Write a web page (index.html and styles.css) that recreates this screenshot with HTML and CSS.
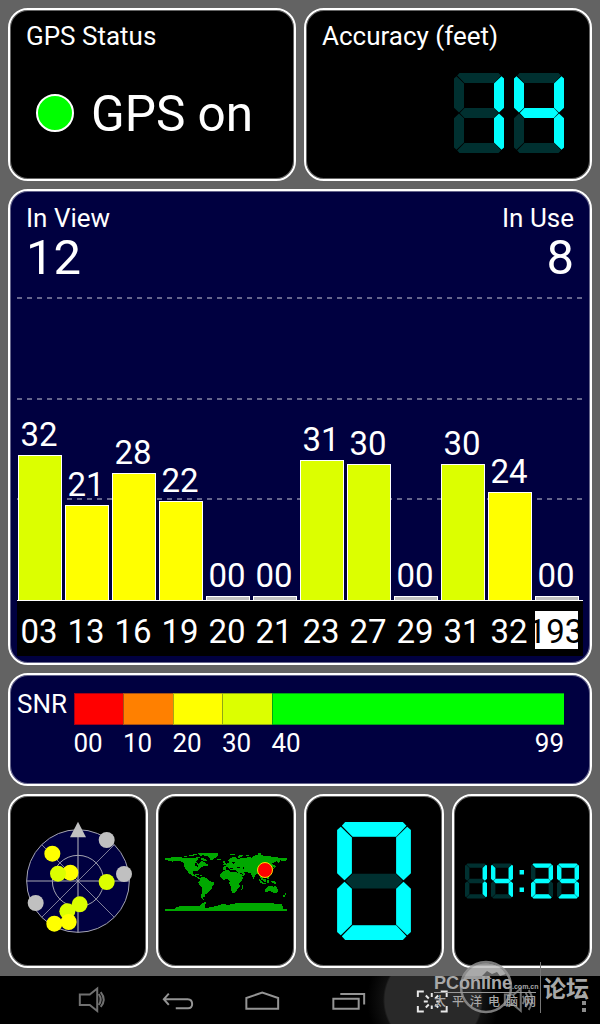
FILE: index.html
```
<!DOCTYPE html>
<html lang="en">
<head>
  <meta charset="UTF-8">
  <title>GPS Test</title>
  <link rel="stylesheet" href="styles.css">
</head>
<body>
  <!-- seven segment shapes, 50 x 80 -->
  <svg class="defs" width="0" height="0">
    <defs>
      <path id="a" d="M5.5 0H44.5L47 2.5L40 10H10.5L3.2 2.5Z"/>
      <path id="b" d="M47.5 3.2L50 5.4V34.8L45 39.5L40 34.8V10.5Z"/>
      <path id="c" d="M45 40.5L50 45.2V74.6L47.5 76.8L40 69.5V45.2Z"/>
      <path id="d" d="M5.5 80H44.5L47 77.5L40 70H10.5L3.2 77.5Z"/>
      <path id="e" d="M5 40.5L10 45.2V69.5L2.5 76.8L0 74.6V45.2Z"/>
      <path id="f" d="M2.5 3.2L10 10.5V34.8L5 39.5L0 34.8V5.4Z"/>
      <path id="g" d="M5.8 40L10.5 35H39.8L44.4 40L39.8 45H10.5Z"/>
      <g id="off">
        <use href="#a"/><use href="#b"/><use href="#c"/><use href="#d"/><use href="#e"/><use href="#f"/><use href="#g"/>
      </g>
      <g id="n0"><use href="#a"/><use href="#b"/><use href="#c"/><use href="#d"/><use href="#e"/><use href="#f"/></g>
      <g id="n1"><use href="#b"/><use href="#c"/></g>
      <g id="n2"><use href="#a"/><use href="#b"/><use href="#g"/><use href="#e"/><use href="#d"/></g>
      <g id="n4"><use href="#f"/><use href="#g"/><use href="#b"/><use href="#c"/></g>
      <g id="n9"><use href="#a"/><use href="#b"/><use href="#c"/><use href="#d"/><use href="#f"/><use href="#g"/></g>
    </defs>
  </svg>

  <main class="dashboard">
    <section class="panel status">
      <h2>GPS Status</h2>
      <div class="status-row">
        <span class="status-dot"></span>
        <span class="status-text">GPS on</span>
      </div>
    </section>

    <section class="panel accuracy">
      <h2>Accuracy (feet)</h2>
      <svg class="lcd" width="110" height="80" viewBox="0 0 110 80">
        <use class="dim" href="#off"/><use href="#n1"/>
        <use class="dim" href="#off" x="60"/><use href="#n4" x="60"/>
      </svg>
    </section>

    <section class="panel signal">
      <div class="signal-head">
        <div><h2>In View</h2><p>12</p></div>
        <div class="right"><h2>In Use</h2><p>8</p></div>
      </div>
      <div class="plot">
        <div class="col"><span>32</span><i class="bar lime" style="height:145px"></i></div>
        <div class="col"><span>21</span><i class="bar yellow" style="height:95px"></i></div>
        <div class="col"><span>28</span><i class="bar yellow" style="height:127px"></i></div>
        <div class="col"><span>22</span><i class="bar yellow" style="height:99px"></i></div>
        <div class="col"><span>00</span><i class="bar none" style="height:4px"></i></div>
        <div class="col"><span>00</span><i class="bar none" style="height:4px"></i></div>
        <div class="col"><span>31</span><i class="bar lime" style="height:140px"></i></div>
        <div class="col"><span>30</span><i class="bar lime" style="height:136px"></i></div>
        <div class="col"><span>00</span><i class="bar none" style="height:4px"></i></div>
        <div class="col"><span>30</span><i class="bar lime" style="height:136px"></i></div>
        <div class="col"><span>24</span><i class="bar yellow" style="height:108px"></i></div>
        <div class="col"><span>00</span><i class="bar none" style="height:4px"></i></div>
      </div>
      <div class="ids">
        <span>03</span><span>13</span><span>16</span><span>19</span><span>20</span><span>21</span>
        <span>23</span><span>27</span><span>29</span><span>31</span><span>32</span><span class="sbas">193</span>
      </div>
    </section>

    <section class="panel snr">
      <h2>SNR</h2>
      <div class="scale">
        <div class="step red"></div>
        <div class="step orange"></div>
        <div class="step yellow"></div>
        <div class="step lime"></div>
        <div class="step green"></div>
        <span>00</span><span>10</span><span>20</span><span>30</span>
        <span class="ends"><b>40</b><b>99</b></span>
      </div>
    </section>

    <section class="panel small">
      <svg width="120" height="124" viewBox="54 86 360 372">
        <circle cx="234" cy="272" r="154" fill="#000040"/>
        <path d="M80 272H388M234 118V426" stroke="#70708c" stroke-width="5"/>
        <path d="M125 163L343 381M343 163L125 381" stroke="#c0c0c8" stroke-width="2"/>
        <g fill="none" stroke="#a4a4b0" stroke-width="3">
          <circle cx="234" cy="272" r="77"/>
          <circle cx="234" cy="272" r="154"/>
        </g>
        <path fill="#c0c0c0" d="M234 94L258 141H210Z"/>
        <g fill="#c0c0c0">
          <circle cx="320" cy="149" r="24"/>
          <circle cx="372" cy="251" r="24"/>
          <circle cx="107" cy="338" r="24"/>
        </g>
        <g fill="#ffff00">
          <circle cx="157" cy="190" r="24"/>
          <circle cx="211" cy="247" r="24"/>
        </g>
        <g fill="#dcff00">
          <circle cx="174" cy="250" r="24"/>
          <circle cx="320" cy="275" r="24"/>
          <circle cx="239" cy="342" r="24"/>
          <circle cx="202" cy="363" r="24"/>
        </g>
        <g fill="#ffff00">
          <circle cx="163" cy="400" r="24"/>
          <circle cx="206" cy="395" r="24"/>
        </g>
      </svg>
    </section>

    <section class="panel small">
      <svg width="122" height="60" viewBox="39 63 366 180">
        <g fill="#00a800" shape-rendering="crispEdges">
          <!-- north america -->
          <path d="M54 84L62 80L86 82L96 84L120 83L128 85L136 84L138 90L132 94L140 102L146 94L152 93L160 99L167 104L158 108L149 111L144 116L138 121L139 127L134 122L123 124L122 130L127 134L132 132L132 137L140 142L147 145L140 146L130 140L120 136L111 131L103 119L98 112L96 101L89 95L72 92L60 95L56 92L39 91V85Z"/>
          <path d="M110 76H125V79H110ZM122 71H134V75H122ZM132 80H143V83H132ZM146 82L158 86L164 92L158 94L147 89ZM136 70L157 68L151 77H143ZM128 85H137V88H128ZM96 79H106V82H96ZM160 104L167 102V108H160ZM133 131H142V134H133ZM144 134H150V137H144Z"/>
          <!-- greenland, iceland -->
          <path d="M155 71L165 68H199V74L195 81L186 85L181 91L176 90L171 80L161 77L153 76Z"/>
          <path d="M196 86H206V90H196ZM212 93H218V98H212ZM217 98H222V106H214V102H217ZM234 72H249V75H234Z"/>
          <!-- south america -->
          <path d="M145 145L150 141L163 143L170 149L174 154L186 158L185 164L180 171L178 179L170 184L166 190L159 193L158 200L153 203L155 209L149 206L147 198L150 185L149 173L142 165L139 157L144 152Z"/>
          <!-- africa -->
          <path d="M215 122L230 120L235 125L247 126L257 128L264 141L274 142L270 151L262 160L263 169L258 175L253 184L247 188L241 189L237 180L236 169L231 161L233 153L227 148L212 149L205 140V132L211 127Z"/>
          <path d="M273 165H270V172L267 180H271L273 171Z"/>
          <!-- europe, asia -->
          <path d="M213 119V110L222 108L220 103L231 98L229 92L234 86L244 80L255 83L254 89L266 85H282L286 80L299 83L306 78L320 73L330 75L334 79L354 78L362 81L376 82L390 85L404 83V91L392 94L385 91L379 101L376 94L369 95L359 101L368 106L362 114L358 124L352 130L347 137L340 142L335 140L333 147L330 151L324 141L319 131L312 134L307 141L305 147L301 140L296 130L285 127L275 126L281 131L275 138L265 142L259 132L255 124L249 119L244 120L235 120L231 114L224 111L221 119Z"/>
          <path d="M319 69H328V75H319ZM258 80L262 76L273 75V78L264 81V85H258ZM281 75H292V78H281ZM369 106L372 109L367 116L362 119L366 112Z"/>
          <!-- islands, australia -->
          <path d="M320 147L326 150L332 158H325ZM334 147L343 145L341 156L335 155ZM330 159H343V162H330ZM345 151H350V160H345ZM357 153H366L372 158V162L363 160ZM345 138L350 143V147L345 145Z"/>
          <path d="M338 177L345 173L350 169L358 167L364 171L368 166L374 172L378 182L374 189L368 190L360 185L351 184L341 187Z"/>
          <path d="M400 190H403V194H400ZM393 197L399 194V200H393Z"/>
          <!-- antarctica -->
          <path d="M39 237H66L73 231L90 228L145 227L150 221L157 216H162L160 225L158 232L165 234L175 232L198 227L210 223L232 224L250 220H300L320 219L348 220L380 221L389 223L392 229V236L405 237V243H39Z"/>
        </g>
        <g fill="#000000" shape-rendering="crispEdges">
          <path d="M128 98L133 98L135 105L143 108L135 110L129 106ZM233 113L239 113L244 118H236ZM252 114L264 110V115H253ZM272 110H277V118H272ZM239 98L249 95V98L243 102ZM265 128L273 133L271 135L265 131Z"/>
        </g>
        <circle cx="339" cy="120" r="22.5" fill="#ff0000" stroke="#ffe000" stroke-width="3"/>
      </svg>
    </section>

    <section class="panel small">
      <svg class="lcd" width="74" height="118" viewBox="0 0 50 80">
        <use class="dim" href="#off"/><use href="#n0"/>
      </svg>
    </section>

    <section class="panel small">
      <svg class="lcd" width="114" height="36" viewBox="0 0 259 80">
        <use class="dim" href="#off"/><use href="#n1"/>
        <use class="dim" href="#off" x="59"/><use href="#n4" x="59"/>
        <path d="M124 15H134V25H124ZM124 55H134V65H124Z"/>
        <use class="dim" href="#off" x="150"/><use href="#n2" x="150"/>
        <use class="dim" href="#off" x="209"/><use href="#n9" x="209"/>
      </svg>
    </section>
  </main>

  <nav class="navbar">
    <svg class="soft" viewBox="0 0 86 48">
      <path d="M31 18.5H41L48.5 12.5V35L41 29H31Z"/>
      <path d="M50 18Q54 23.5 50 29M52 16Q58 23.5 52 31"/>
    </svg>
    <svg viewBox="0 0 86 48">
      <path d="M34 17.5L29 23.2L34 29M29 23.2H53Q57.5 23.5 57.5 28T53 32.3H41"/>
    </svg>
    <svg viewBox="0 0 86 48">
      <path d="M26.5 32.7V22L42.5 16.5L58.5 22V32.7Z"/>
    </svg>
    <svg viewBox="0 0 86 48">
      <path d="M27.5 22.7H53V32.7H27.5ZM34.5 18H58.5V28.5"/>
    </svg>
    <svg class="bright" viewBox="0 0 86 48">
      <path d="M27 21V15.5H33M50 15.5H56V21M56 30V35.5H50M33 35.5H27V30"/>
      <path d="M41 17V21M41 29.5V33M33 25.5H37M45.5 25.5H49.5M35 19.5L38 22.5M47.5 19.5L44.5 22.5M35 31.5L38 28.5M47.5 31.5L44.5 28.5"/>
    </svg>
    <svg class="soft" viewBox="0 0 86 48">
      <path d="M28 18.500H37L44 12.500V35L37 29H28Z"/>
      <path d="M46 20Q49 24 46 28M49 17Q54 24 49 31M52 14Q59 24 52 34"/>
    </svg>
    <span class="more"><i></i><i></i><i></i></span>
  </nav>

  <!-- site watermark over the bottom right corner -->
  <div class="watermark">
    <svg class="globe" width="56" height="56" viewBox="0 0 56 56">
      <path d="M5 17C12 3 36 -3 48 15L42 17L39 13L34 15L29 12L24 17H30L34 20H4Z" fill="#bbb"/>
      <circle cx="28" cy="28" r="25" fill="none" stroke="#999" stroke-width="2.5"/>
    </svg>
    <div class="brand">
      <div class="brand-en">PConline<small>.com.cn</small></div>
      <div class="brand-cn">太平洋电脑网</div>
    </div>
    <div class="forum">论坛</div>
  </div>
</body>
</html>
```

FILE: styles.css
```
* {
  box-sizing: border-box;
}

body {
  margin: 0;
  width: 600px;
  height: 1024px;
  overflow: hidden;
  position: relative;
  background: #636363;
  color: #fff;
  font-family: Roboto, "Noto Sans CJK SC", sans-serif;
}

.defs {
  display: block;
}

h2, p {
  margin: 0;
  font-weight: normal;
}

h2 {
  font-size: 26px;
  line-height: 36px;
}

.dashboard {
  display: grid;
  grid-template-columns: repeat(4, 140px);
  grid-template-rows: 173px 476px 113px 174px;
  gap: 8px;
  padding: 8px;
  height: 976px;
}

.panel {
  border: 2px solid #fff;
  border-radius: 20px;
  background: #000;
  box-shadow: inset 0 0 0 1px rgba(255, 255, 255, 0.4);
}

/* top row */
.status, .accuracy {
  grid-column: span 2;
  padding: 8px 16px 0;
}

.status-row {
  display: flex;
  align-items: center;
  gap: 17px;
  height: 118px;
  padding-left: 10px;
}

.status-dot {
  width: 38px;
  height: 38px;
  border: 2px solid #fff;
  border-radius: 50%;
  background: #00ff00;
}

.status-text {
  font-size: 49.5px;
  line-height: 58px;
  padding-top: 2px;
}

.accuracy .lcd {
  display: block;
  margin: 19px 10px 0 auto;
}

.lcd {
  fill: #00ffff;
}

.dim {
  fill: #003030;
}

/* satellite bars */
.signal {
  grid-column: span 4;
  padding: 0 7px;
  background: #000040;
}

.signal-head {
  display: flex;
  justify-content: space-between;
  height: 85px;
  padding: 9px 9px 0;
}

.signal-head p {
  font-size: 49px;
  line-height: 43px;
}

.right {
  text-align: right;
}

.plot {
  --dash: repeating-linear-gradient(90deg, #66668c 0 5px, transparent 5px 10px);
  display: flex;
  align-items: flex-end;
  gap: 3px;
  height: 325px;
  padding-left: 1px;
  border-bottom: 1px solid #fff;
  background: var(--dash) 0 21px / 100% 2px no-repeat,
              var(--dash) 0 122px / 100% 2px no-repeat,
              var(--dash) 0 222px / 100% 2px no-repeat;
}

.col {
  width: 44px;
  font-size: 33px;
  line-height: 40px;
  text-align: center;
}

.col span {
  display: block;
  padding-right: 2px;
}

.bar {
  display: block;
  border: 1px solid #fff;
  border-bottom: 0;
}

.red { background: #ff0000; }
.orange { background: #ff8000; }
.yellow { background: #ffff00; }
.lime { background: #dcff00; }
.green { background: #00ff00; }
.none { background: #c0c0c0; }

.ids {
  display: flex;
  gap: 3px;
  height: 55px;
  padding: 10px 0 0 1px;
  background: #000;
  font-size: 33px;
  line-height: 41px;
}

.ids span {
  display: flex;
  justify-content: center;
  width: 44px;
  height: 38px;
  padding-right: 2px;
}

.ids .sbas {
  width: 43px;
  overflow: hidden;
  background: #fff;
  color: #000;
}

/* snr legend */
.snr {
  grid-column: span 4;
  display: flex;
  padding: 18px 26px 0 7px;
  background: #000040;
}

.snr h2 {
  width: 56.5px;
  line-height: 22px;
}

.scale {
  display: grid;
  grid-template-columns: repeat(4, 49.5px) 1fr;
  grid-template-rows: 32px 36px;
  flex: 1;
}

.step {
  border: solid rgba(0, 0, 64, 0.35);
  border-width: 1px 0 1px 1px;
}

.scale span {
  font-size: 26px;
  line-height: 36px;
}

.ends {
  display: flex;
  justify-content: space-between;
}

.ends b {
  font-weight: normal;
}

.small {
  display: flex;
  align-items: center;
  justify-content: center;
}

/* system bar */
.navbar {
  display: flex;
  height: 48px;
  padding-left: 49px;
  background: radial-gradient(circle at 433px 24px, #292929 0 48px, #101010 50px, #000 66px) #000;
}

.navbar svg {
  flex: none;
  width: 85.5px;
  height: 48px;
  fill: none;
  stroke: #949494;
  stroke-width: 2;
}

.navbar .soft {
  stroke: #707070;
}

.navbar .bright {
  stroke: #e8e8e8;
}

.more {
  display: flex;
  flex-direction: column;
  gap: 3px;
  padding: 18px 0 0 20px;
}

.more i {
  width: 4px;
  height: 4px;
  background: #8c8c8c;
}

.watermark {
  position: absolute;
  left: 434px;
  top: 960px;
  width: 160px;
  height: 56px;
  display: flex;
  color: #a8a8a8;
}

.globe {
  position: absolute;
  left: 24px;
  top: -1px;
  opacity: 0.8;
}

.brand {
  position: relative;
  width: 107px;
  padding-top: 13px;
  margin-top: 2px;
  height: 51px;
  border-right: 1px solid #777;
}

.brand-en {
  width: 102px;
  height: 18px;
  border-bottom: 1px solid #999;
  font: bold 18px/17px "Liberation Sans", sans-serif;
  white-space: nowrap;
}

.brand-en small {
  font-size: 7px;
}

.brand-cn {
  font-family: "Noto Sans CJK SC", sans-serif;
  font-size: 12px;
  font-weight: 500;
  line-height: 15px;
  letter-spacing: 6px;
  white-space: nowrap;
}

.forum {
  padding: 11px 0 0 2px;
  font: bold 23px/32px "Noto Sans CJK SC", sans-serif;
}
```
